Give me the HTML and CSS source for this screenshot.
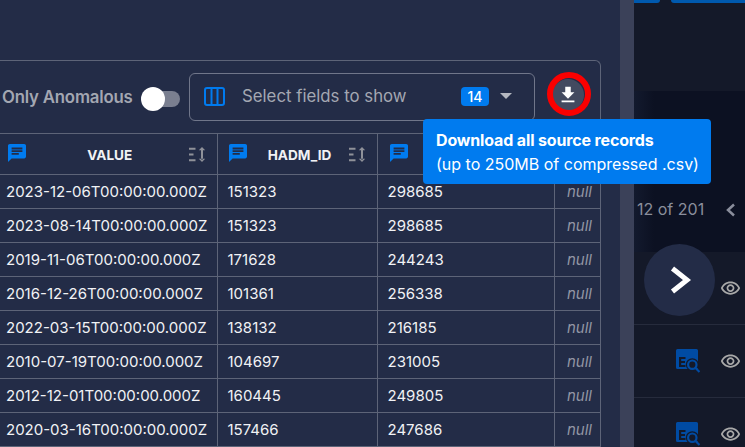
FILE: index.html
```html
<!DOCTYPE html>
<html lang="en">
<head>
<meta charset="utf-8">
<title>Source records</title>
<link rel="stylesheet" href="styles.css">
</head>
<body>
<div class="page">
  <main class="panel">
    <section class="card">
      <div class="toolbar">
        <span class="only">Only Anomalous</span>
        <span class="toggle"><span class="knob"></span></span>
        <div class="select">
          <svg class="cols" viewBox="0 0 21 19"><rect x="1" y="1" width="19" height="17" rx="2"/><path d="M7.500 1v17M13.500 1v17"/></svg>
          <span class="placeholder">Select fields to show</span>
          <span class="badge">14</span>
          <span class="caret"></span>
        </div>
        <button class="dl" aria-label="Download">
          <svg viewBox="0 0 24 24"><path d="M19 9h-4V3H9v6H5l7 7 7-7zM5 18v2h14v-2H5z"/></svg>
        </button>
      </div>
      <table class="grid">
        <colgroup><col class="c1"><col class="c2"><col class="c3"><col class="c4"></colgroup>
        <thead>
          <tr>
            <th><div class="hd h1"><svg class="chat" viewBox="2 2 20 20"><path d="M20 2H4c-1.100 0-2 .9-2 2v18l4-4h14c1.100 0 2-.9 2-2V4c0-1.100-.9-2-2-2zM6 9h12v2H6V9zm8 5H6v-2h8v2zm4-6H6V6h12v2z"/></svg><span class="name">VALUE</span><svg class="sort" viewBox="0 0 18 15"><path d="M0 .8h6.500v2H0zM0 6.500h4.500v2H0zM0 12.200h6.500v2H0zM12 2.500v10h2v-10zM13 0l-3.200 3.200h6.400zM13 15l-3.200-3.200h6.400z"/></svg></div></th>
            <th><div class="hd h2"><svg class="chat" viewBox="2 2 20 20"><path d="M20 2H4c-1.100 0-2 .9-2 2v18l4-4h14c1.100 0 2-.9 2-2V4c0-1.100-.9-2-2-2zM6 9h12v2H6V9zm8 5H6v-2h8v2zm4-6H6V6h12v2z"/></svg><span class="name">HADM_ID</span><svg class="sort" viewBox="0 0 18 15"><path d="M0 .8h6.500v2H0zM0 6.500h4.500v2H0zM0 12.200h6.500v2H0zM12 2.500v10h2v-10zM13 0l-3.200 3.200h6.400zM13 15l-3.200-3.200h6.400z"/></svg></div></th>
            <th><div class="hd h3"><svg class="chat" viewBox="2 2 20 20"><path d="M20 2H4c-1.100 0-2 .9-2 2v18l4-4h14c1.100 0 2-.9 2-2V4c0-1.100-.9-2-2-2zM6 9h12v2H6V9zm8 5H6v-2h8v2zm4-6H6V6h12v2z"/></svg></div></th>
            <th></th>
          </tr>
        </thead>
        <tbody>
          <tr><td>2023-12-06T00:00:00.000Z</td><td>151323</td><td>298685</td><td class="null">null</td></tr>
          <tr><td>2023-08-14T00:00:00.000Z</td><td>151323</td><td>298685</td><td class="null">null</td></tr>
          <tr><td>2019-11-06T00:00:00.000Z</td><td>171628</td><td>244243</td><td class="null">null</td></tr>
          <tr><td>2016-12-26T00:00:00.000Z</td><td>101361</td><td>256338</td><td class="null">null</td></tr>
          <tr><td>2022-03-15T00:00:00.000Z</td><td>138132</td><td>216185</td><td class="null">null</td></tr>
          <tr><td>2010-07-19T00:00:00.000Z</td><td>104697</td><td>231005</td><td class="null">null</td></tr>
          <tr><td>2012-12-01T00:00:00.000Z</td><td>160445</td><td>249805</td><td class="null">null</td></tr>
          <tr><td>2020-03-16T00:00:00.000Z</td><td>157466</td><td>247686</td><td class="null">null</td></tr>
        </tbody>
      </table>
    </section>
  </main>
  <div class="scrollbar"></div>
  <aside class="side">
    <div class="tabs"><span class="tab t1"></span><span class="tab t2"></span></div>
    <div class="side-top"></div>
    <div class="side-head"><span class="count">12 of 201</span><svg class="prev" viewBox="0 0 11 14"><path d="M9 1.500 3 7l6 5.500"/></svg></div>
    <div class="row">
      <svg class="eye" viewBox="0 0 24 24"><path d="M12 6c3.790 0 7.170 2.130 8.820 5.500C19.170 14.870 15.790 17 12 17s-7.170-2.130-8.820-5.500C4.830 8.130 8.210 6 12 6m0-2C7 4 2.730 7.110 1 11.500 2.730 15.890 7 19 12 19s9.270-3.110 11-7.500C21.270 7.110 17 4 12 4zm0 5c1.380 0 2.500 1.120 2.500 2.500S13.380 14 12 14s-2.500-1.120-2.500-2.500S10.620 9 12 9m0-2c-2.480 0-4.500 2.020-4.500 4.500S9.520 16 12 16s4.500-2.020 4.500-4.500S14.480 7 12 7z"/></svg>
    </div>
    <div class="row">
      <svg class="eq" viewBox="0 0 24 24"><path class="eq-body" fill-rule="evenodd" d="M1.500 0h19A1.500 1.500 0 0 1 22 1.500V20H1.500A1.500 1.500 0 0 1 0 18.500v-17A1.500 1.500 0 0 1 1.500 0zM3 8v10h6.500v-2H5.200v-2H9v-2H5.200v-2h4.300V8z"/><circle class="eq-gap" cx="16.300" cy="15.700" r="6.500"/><circle class="eq-lens" cx="16.300" cy="15.700" r="4.200"/><path class="eq-lens" d="M19.500 19l4 4"/></svg>
      <svg class="eye" viewBox="0 0 24 24"><path d="M12 6c3.790 0 7.170 2.130 8.820 5.500C19.170 14.870 15.790 17 12 17s-7.170-2.130-8.820-5.500C4.830 8.130 8.210 6 12 6m0-2C7 4 2.730 7.110 1 11.500 2.730 15.890 7 19 12 19s9.270-3.110 11-7.500C21.270 7.110 17 4 12 4zm0 5c1.380 0 2.500 1.120 2.500 2.500S13.380 14 12 14s-2.500-1.120-2.500-2.500S10.620 9 12 9m0-2c-2.480 0-4.500 2.020-4.500 4.500S9.520 16 12 16s4.500-2.020 4.500-4.500S14.480 7 12 7z"/></svg>
    </div>
    <div class="row">
      <svg class="eq" viewBox="0 0 24 24"><path class="eq-body" fill-rule="evenodd" d="M1.500 0h19A1.500 1.500 0 0 1 22 1.500V20H1.500A1.500 1.500 0 0 1 0 18.500v-17A1.500 1.500 0 0 1 1.500 0zM3 8v10h6.500v-2H5.200v-2H9v-2H5.200v-2h4.300V8z"/><circle class="eq-gap" cx="16.300" cy="15.700" r="6.500"/><circle class="eq-lens" cx="16.300" cy="15.700" r="4.200"/><path class="eq-lens" d="M19.500 19l4 4"/></svg>
      <svg class="eye" viewBox="0 0 24 24"><path d="M12 6c3.790 0 7.170 2.130 8.820 5.500C19.170 14.870 15.790 17 12 17s-7.170-2.130-8.820-5.500C4.830 8.130 8.210 6 12 6m0-2C7 4 2.730 7.110 1 11.500 2.730 15.890 7 19 12 19s9.270-3.110 11-7.500C21.270 7.110 17 4 12 4zm0 5c1.380 0 2.500 1.120 2.500 2.500S13.380 14 12 14s-2.500-1.120-2.500-2.500S10.620 9 12 9m0-2c-2.480 0-4.500 2.020-4.500 4.500S9.520 16 12 16s4.500-2.020 4.500-4.500S14.480 7 12 7z"/></svg>
    </div>
  </aside>
  <div class="tooltip"><strong>Download all source records</strong><span>(up to 250MB of compressed .csv)</span></div>
  <div class="ring"></div>
  <button class="next" aria-label="Next"><svg viewBox="0 0 24 30"><path d="M4.500 3.500 19 15 4.500 26.500"/></svg></button>
</div>
</body>
</html>
```
FILE: styles.css
```css
* { box-sizing: border-box; }
html, body { margin: 0; height: 100%; overflow: hidden; }
body { font-family: Inter, "Liberation Sans", sans-serif; background: #232c47; color: #f1f2f5; }

.page { position: relative; display: flex; width: 745px; height: 447px; overflow: hidden; }

.panel { width: 620px; flex: none; padding-top: 60px; background: #232c47; }
.card { width: 601px; border: 1px solid #5d6478; border-left: 0; border-bottom: 0; border-top-right-radius: 6px; }

.toolbar { display: flex; align-items: center; height: 72px; padding-left: 2px; }
.only { width: 139px; font-size: 16.800px; font-weight: 600; letter-spacing: -.2px; color: #a3a7b2; white-space: nowrap; }
.toggle { position: relative; display: block; width: 39px; height: 24px; margin-top: 4px; flex: none; }
.toggle::before { content: ""; position: absolute; left: 12px; right: 0; top: 4px; height: 16px; border-radius: 8px; background: #7a7f90; }
.knob { position: absolute; left: 0; top: 0; width: 24px; height: 24px; border-radius: 50%; background: #fff; }

.select { display: flex; align-items: center; width: 346px; height: 48px; margin-left: 9px; padding-left: 14px; border: 1px solid #70768a; border-radius: 6px; flex: none; }
.cols { width: 21px; height: 19px; margin-bottom: 2px; fill: none; stroke: #007bef; stroke-width: 2; flex: none; }
.placeholder { width: 236px; padding: 0 0 2px 17px; font-size: 16.800px; color: #a3a7b2; white-space: nowrap; flex: none; }
.badge { width: 28px; height: 19px; margin-bottom: 2px; border-radius: 4px; background: #007bef; color: #fff; font-size: 14px; font-weight: 500; line-height: 19px; text-align: center; flex: none; }
.caret { width: 0; height: 0; margin: 0 0 2px 11px; border-left: 6.500px solid transparent; border-right: 6.500px solid transparent; border-top: 6px solid #b4b7c0; }

.dl { display: flex; align-items: center; justify-content: center; width: 32px; height: 32px; margin: 0 0 4px 17px; padding: 0; border: 0; border-radius: 50%; background: #434a60; flex: none; }
.dl svg { width: 22px; height: 22px; fill: #fff; }

.grid { width: 600px; table-layout: fixed; border-collapse: collapse; }
.c1 { width: 217px; } .c2 { width: 160px; } .c3 { width: 177px; } .c4 { width: 46px; }
.grid th, .grid td { padding: 0; border: 1px solid #5d6478; height: 34px; }
.grid th { height: 41px; }
.grid tr > :first-child { border-left: 0; }
.grid tr > :last-child { border-right: 0; }
.grid td { padding-left: 5px; font-size: 15px; white-space: nowrap; overflow: hidden; }
.grid td:first-child { padding-left: 6px; }
.grid td:nth-child(n+2):nth-child(-n+3) { padding-left: 10px; }
.grid td.null { padding: 0 8px 0 0; text-align: right; font-style: italic; color: #9296a4; font-size: 15px; }

.hd { display: flex; align-items: center; }
.h1 { padding: 0 10px 0 8px; }
.h2 { padding: 0 10px 0 11px; }
.h3 { padding: 0 0 0 12px; }
.chat { width: 18px; height: 18px; margin-bottom: 2px; fill: #007bef; flex: none; }
.name { flex: 1; padding-top: 2px; text-align: center; font-size: 13.600px; font-weight: 700; color: #f1f2f5; }
.h1 .name { padding-left: 5px; }
.h2 .name { padding-left: 4px; }
.sort { width: 18px; height: 15px; fill: #8f9199; flex: none; }

.scrollbar { width: 14px; flex: none; background: #3b4159; }

.side { flex: 1; display: flex; flex-direction: column; overflow: hidden; background: #141929; }
.tabs { display: flex; gap: 11px; height: 3px; flex: none; background: #141929; }
.tab { display: block; height: 3px; background: #0059ae; }
.t1 { width: 26px; border-radius: 0 0 4px 0; }
.t2 { width: 74px; border-radius: 0 0 0 4px; }
.side-top { height: 88px; flex: none; background: #141929; }
.side-head { display: flex; align-items: flex-start; height: 161px; padding: 108px 0 0 3px; flex: none; background: linear-gradient(90deg, #131a2e, #0c1122 20px); }
.count { font-size: 16px; color: #8a8e9c; white-space: nowrap; }
.prev { width: 11px; height: 14px; margin: 4px 0 0 21px; fill: none; stroke: #8a8e9c; stroke-width: 2.500; }
.row { display: flex; align-items: center; justify-content: flex-end; gap: 20px; height: 73px; padding-right: 4px; border-bottom: 1px solid #262b3c; flex: none; }
.eye { width: 21px; height: 21px; fill: #a9a9a9; flex: none; }
.eq { width: 24px; height: 24px; flex: none; }
.eq-body { fill: #004ba3; }
.eq-gap { fill: #141929; }
.eq-lens { fill: none; stroke: #004ba3; stroke-width: 2.200; }

.tooltip { position: absolute; left: 423px; top: 119px; display: flex; flex-direction: column; justify-content: center; gap: 3px; width: 288px; height: 65px; padding: 2px 0 0 13px; background: #007bef; color: #fff; border-radius: 4px; font-size: 16px; line-height: 21px; }
.tooltip strong { font-weight: 700; letter-spacing: -.15px; }
.ring { position: absolute; left: 547px; top: 72px; width: 44px; height: 44px; border: 6px solid #fa0000; border-radius: 50%; }
.next { position: absolute; left: 644px; top: 244px; display: flex; align-items: center; justify-content: center; width: 71px; height: 72px; padding: 0; border: 0; border-radius: 50%; background: #232c47; }
.next svg { width: 24px; height: 30px; fill: none; stroke: #fff; stroke-width: 5; }
```
